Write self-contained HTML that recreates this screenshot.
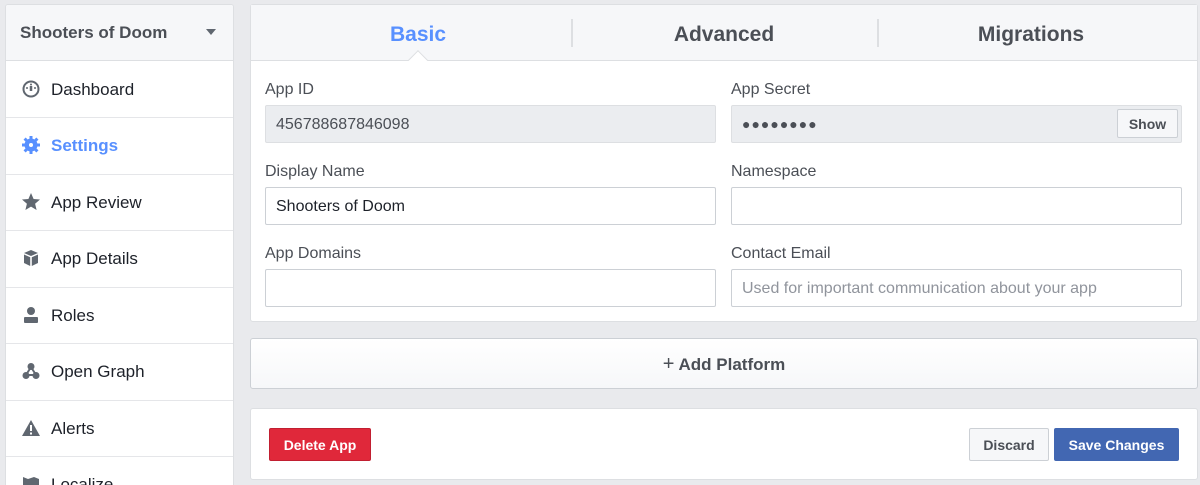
<!DOCTYPE html>
<html style="height:485px;overflow:hidden"><head><style>
*{box-sizing:border-box;margin:0;padding:0}
body{width:1200px;height:485px;background:#e9eaed;font-family:"Liberation Sans",Arial,sans-serif;position:relative;overflow:hidden;color:#1d2129}
.a{position:absolute}
.side{left:5px;top:4px;width:229px;height:481px;background:#fff;border:1px solid #dddfe2;border-bottom:none;border-radius:3px 3px 0 0;overflow:hidden}
.sh{left:0;top:0;width:227px;height:56px;background:#f6f7f9;border-bottom:1px solid #dddfe2;font-weight:bold;font-size:17px;color:#4b4f56;padding:18px 0 0 14px}
.it{left:0;width:227px;height:56.5px;border-bottom:1px solid #e5e6e9;font-size:17px;color:#1d2129;padding-top:18px;padding-left:45px}
.ic{position:absolute;left:16px;top:18px;width:18px;height:18px}
.panel{background:#fff;border:1px solid #dddfe2;border-radius:3px}
.tabs{left:0;top:0;width:946px;height:56px;background:#f6f7f9;border-bottom:1px solid #dddfe2}
.tab{top:18px;font-size:21px;font-weight:bold;color:#4b4f56;width:306px;text-align:center}
.lbl{font-size:16px;color:#4b4f56}
.in{height:38px;border:1px solid #ccd0d5;border-radius:2px;background:#fff;font-size:16px;padding:10px 10px;width:451px}
.btn{border-radius:2px;font-size:14px;font-weight:bold;text-align:center;padding-top:8px;height:33px}
</style></head><body>
<div class="a side">
 <div class="a sh">Shooters of Doom<span class="a" style="left:200px;top:24px;width:0;height:0;border-left:5px solid transparent;border-right:5px solid transparent;border-top:6px solid #606770"></span></div>
 <div class="a it" style="top:56.5px"><svg class="ic" viewBox="0 0 18 18"><circle cx="9" cy="9" r="7.5" fill="none" stroke="#606770" stroke-width="2"/><path d="M9 6v5" stroke="#606770" stroke-width="2.5"/><circle cx="5" cy="8" r="1" fill="#606770"/><circle cx="13" cy="8" r="1" fill="#606770"/><circle cx="9" cy="4.5" r="1" fill="#606770"/></svg>Dashboard</div>
 <div class="a it" style="top:113px;color:#5890ff;font-weight:bold"><svg class="ic" viewBox="0 0 18 18"><circle cx="9" cy="9" r="6.5" fill="#5890ff"/><g stroke="#5890ff" stroke-width="3"><path d="M9 0v18M0 9h18M2.6 2.6l12.8 12.8M15.4 2.6L2.6 15.4"/></g><circle cx="9" cy="9" r="2" fill="#fff"/></svg>Settings</div>
 <div class="a it" style="top:169.5px"><svg class="ic" viewBox="0 0 18 18"><path d="M9 0l2.6 6 6.4.5-4.9 4.2 1.5 6.3L9 13.6 3.4 17l1.5-6.3L0 6.5 6.4 6z" fill="#606770"/></svg>App Review</div>
 <div class="a it" style="top:226px"><svg class="ic" viewBox="0 0 18 18"><path d="M9 1l7 3-7 3-7-3z M2 5.5l6.2 2.7V17L2 14z M16 5.5L9.8 8.2V17L16 14z" fill="#606770"/></svg>App Details</div>
 <div class="a it" style="top:282.5px"><svg class="ic" viewBox="0 0 18 18"><circle cx="9" cy="5" r="4" fill="#606770"/><rect x="2" y="11" width="14" height="6" rx="1" fill="#606770"/></svg>Roles</div>
 <div class="a it" style="top:339px"><svg class="ic" viewBox="0 0 18 18"><path d="M9 5L4 13M9 5l5 8M4 13h10" stroke="#606770" stroke-width="2"/><circle cx="9" cy="4.5" r="3.5" fill="#606770"/><circle cx="4" cy="13.5" r="3.5" fill="#606770"/><circle cx="14" cy="13.5" r="3.5" fill="#606770"/></svg>Open Graph</div>
 <div class="a it" style="top:395.5px"><svg class="ic" viewBox="0 0 18 18"><path d="M9 1l9 16H0z" fill="#606770"/><path d="M9 6v6M9 13.5v2" stroke="#fff" stroke-width="2"/></svg>Alerts</div>
 <div class="a it" style="top:452px;height:29px;border-bottom:none"><svg class="ic" viewBox="0 0 18 18"><path d="M1 2l5 2 6-2 5 2v13l-5-2-6 2-5-2z" fill="#606770"/></svg>Localize</div>
</div>
<div class="a panel" style="left:250px;top:4px;width:948px;height:318px">
 <div class="a tabs">
  <div class="a tab" style="left:14px;color:#5890ff">Basic</div>
  <div class="a" style="left:320px;top:14px;width:2px;height:28px;background:#dddfe2"></div>
  <div class="a tab" style="left:320px">Advanced</div>
  <div class="a" style="left:626px;top:14px;width:2px;height:28px;background:#dddfe2"></div>
  <div class="a tab" style="left:627px">Migrations</div>
  <div class="a" style="left:160px;top:48px;width:14px;height:14px;background:#fff;border-left:1px solid #dddfe2;border-top:1px solid #dddfe2;transform:rotate(45deg)"></div>
 </div>
 <div class="a lbl" style="left:14px;top:76px">App ID</div>
 <div class="a in" style="left:14px;top:100px;background:#ebedf0;border-color:#dddfe2;color:#4b4f56">456788687846098</div>
 <div class="a lbl" style="left:480px;top:76px">App Secret</div>
 <div class="a in" style="left:480px;top:100px;background:#ebedf0;border-color:#dddfe2;color:#4b4f56;font-size:14px;letter-spacing:1px;padding-top:10px">●●●●●●●●</div>
 <div class="a btn" style="left:866px;top:104px;width:61px;height:29px;padding-top:6px;background:#f6f7f9;border:1px solid #ccd0d5;color:#4b4f56">Show</div>
 <div class="a lbl" style="left:14px;top:158px">Display Name</div>
 <div class="a in" style="left:14px;top:182px">Shooters of Doom</div>
 <div class="a lbl" style="left:480px;top:158px">Namespace</div>
 <div class="a in" style="left:480px;top:182px"></div>
 <div class="a lbl" style="left:14px;top:240px">App Domains</div>
 <div class="a in" style="left:14px;top:264px"></div>
 <div class="a lbl" style="left:480px;top:240px">Contact Email</div>
 <div class="a in" style="left:480px;top:264px;color:#90949c">Used for important communication about your app</div>
</div>
<div class="a panel" style="left:250px;top:338px;width:948px;height:51px;background:linear-gradient(#fff,#f6f7f9);border-color:#ccd0d5;text-align:center;font-size:17px;font-weight:bold;color:#4b4f56;padding-top:14px"><span style="font-weight:normal;font-size:20px">+</span> Add Platform</div>
<div class="a panel" style="left:250px;top:408px;width:948px;height:72px">
 <div class="a btn" style="left:18px;top:19px;width:102px;background:#e0283a;border:1px solid #c11f31;color:#fff">Delete App</div>
 <div class="a btn" style="left:718px;top:19px;width:80px;background:#f6f7f9;border:1px solid #ccd0d5;color:#4b4f56">Discard</div>
 <div class="a btn" style="left:803px;top:19px;width:125px;background:#4267b2;border:1px solid #4267b2;color:#fff">Save Changes</div>
</div>
</body></html>
